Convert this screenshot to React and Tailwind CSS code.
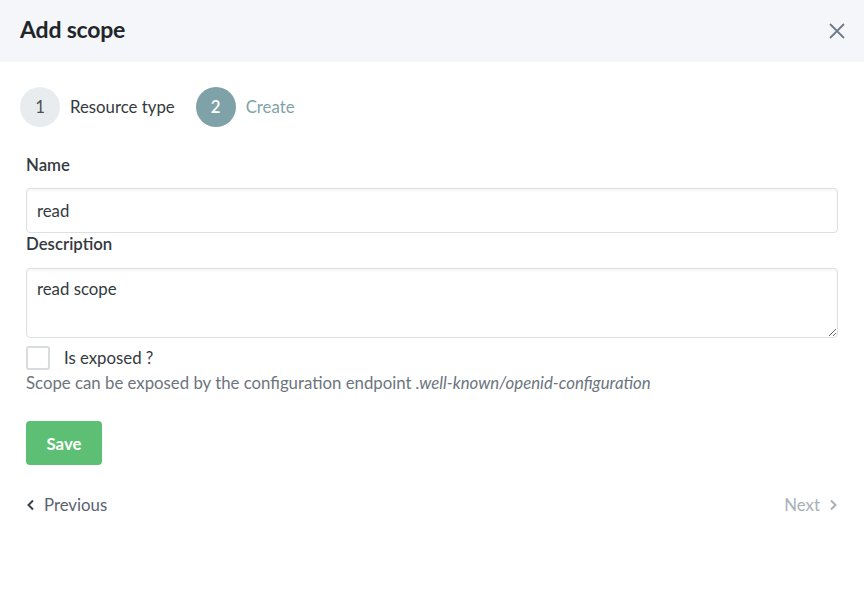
import React from 'react';

// --- Add scope: step 2 of the wizard ---
const Step = ({ n, label, active }) => (
  <div className="flex items-center gap-[10px]">
    <div
      className={
        active
          ? 'w-10 h-10 rounded-full bg-[#7fa2a8] text-white font-semibold flex items-center justify-center'
          : 'w-10 h-10 rounded-full bg-[#e9ecef] text-[#4a4f55] flex items-center justify-center'
      }
    >
      {n}
    </div>
    <span className={active ? 'text-[#7fa2a8]' : 'text-[#343a40]'}>{label}</span>
  </div>
);

export default function App() {
  return (
    <div className="w-[864px] h-[605px] bg-white text-[16.8px] text-[#343a40] font-['Source_Sans_Pro','Lato',sans-serif]">
      <div className="h-[62px] bg-[#f5f6fa] flex items-center justify-between px-5 pb-[3px]">
        <h1 className="text-[23px] font-bold text-[#212529] tracking-[-0.2px]">Add scope</h1>
        <button className="text-[#6c7a89] mr-[-2px] mt-[2px]">
          <svg width="18" height="18" viewBox="0 0 18 18" fill="none" stroke="currentColor" strokeWidth="1.8">
            <path d="M2 2L16 16M16 2L2 16" />
          </svg>
        </button>
      </div>

      <div className="px-5 pt-[25px] flex items-center gap-[21px]">
        <Step n="1" label="Resource type" />
        <Step n="2" label="Create" active />
      </div>

      <div className="px-[26px] pt-[27px]">
        <label className="block font-semibold text-[#343a40] leading-[22px]">Name</label>
        <input
          defaultValue="read"
          className="mt-[12px] w-full h-[45px] rounded-[4px] border border-[#dcdfe3] px-[10px] text-[#343a40] shadow-[inset_0_2px_3px_rgba(0,0,0,0.04)] outline-none"
        />
        <label className="block font-semibold text-[#343a40] leading-[22px]">Description</label>
        <textarea
          defaultValue="read scope"
          className="mt-[13px] block w-full h-[70px] rounded-[4px] border border-[#dcdfe3] px-[10px] pt-[7px] text-[#343a40] shadow-[inset_0_2px_3px_rgba(0,0,0,0.04)] outline-none"
        />
        <div className="flex items-center gap-[14px] mt-[7px]">
          <span className="w-6 h-6 rounded-[3px] border-2 border-[#d8dcdf] bg-white" />
          <span className="text-[#343a40]">Is exposed ?</span>
        </div>
        <p className="text-[#6c757d] leading-[22px] mt-[2px]">
          Scope can be exposed by the configuration endpoint <em>.well-known/openid-configuration</em>
        </p>
        <button className="mt-[27px] w-[76px] h-[44px] rounded-[4px] bg-[#5cbf74] text-white font-bold">Save</button>

        <div className="flex items-center justify-between mt-[27px]">
          <button className="flex items-center gap-[8px] text-[#5a6270]">
            <svg width="10" height="12" viewBox="0 0 10 12" fill="none" stroke="#3d434a" strokeWidth="2">
              <path d="M7 1.5L2.5 6L7 10.5" />
            </svg>
            Previous
          </button>
          <button className="flex items-center gap-[8px] text-[#a9b0b6]">
            Next
            <svg width="10" height="12" viewBox="0 0 10 12" fill="none" stroke="#a9b0b6" strokeWidth="2">
              <path d="M3 1.5L7.5 6L3 10.5" />
            </svg>
          </button>
        </div>
      </div>
    </div>
  );
}
